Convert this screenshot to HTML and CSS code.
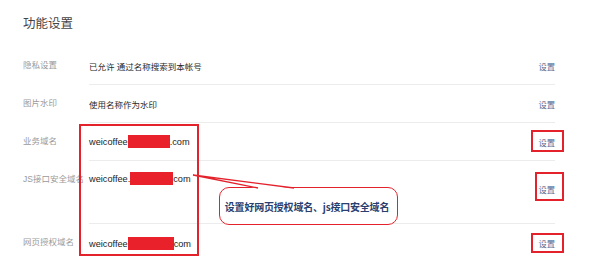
FILE: index.html
```html
<!DOCTYPE html>
<html lang="zh">
<head>
<meta charset="utf-8">
<link rel="stylesheet" href="styles.css">
</head>
<body>
<div class="page">
  <h2 class="title">功能设置</h2>
  <div class="list">
    <div class="row">
      <div class="label">隐私设置</div>
      <div class="body"><span class="value">已允许 通过名称搜索到本帐号</span><a class="act">设置</a></div>
    </div>
    <div class="row">
      <div class="label">图片水印</div>
      <div class="body"><span class="value">使用名称作为水印</span><a class="act">设置</a></div>
    </div>
    <div class="row">
      <div class="label">业务域名</div>
      <div class="body"><span class="value dom">weicoffee<span class="redact"></span>.com</span><a class="act">设置</a></div>
    </div>
    <div class="row tall">
      <div class="label">JS接口安全域名</div>
      <div class="body"><span class="value dom">weicoffee.<span class="redact r2"></span>com</span><a class="act">设置</a></div>
    </div>
    <div class="row last">
      <div class="label">网页授权域名</div>
      <div class="body"><span class="value dom">weicoffee<span class="redact r3"></span>com</span><a class="act">设置</a></div>
    </div>
  </div>

  <div class="mark m-box"></div>
  <div class="mark m1"></div>
  <div class="mark m2"></div>
  <div class="mark m3"></div>

  <div class="callout">设置好网页授权域名、js接口安全域名</div>
  <svg class="pointer" width="120" height="20" viewBox="190 172 120 20">
    <polygon points="193,175 294,188.5 258,188.5" fill="#fff"/>
    <polyline points="258,188 193,175 294,188" fill="none" stroke="#e3222c" stroke-width="1.3"/>
  </svg>
</div>
</body>
</html>
```
FILE: styles.css
```css
html, body {
  margin: 0;
  padding: 0;
  background: #fff;
}
.page {
  position: relative;
  width: 601px;
  height: 263px;
  overflow: hidden;
  font-family: "Liberation Sans", "Noto Sans CJK SC", sans-serif;
}
.title {
  margin: 0;
  padding: 15px 0 0 23px;
  height: 32px;
  line-height: 18px;
  font-size: 12.5px;
  font-weight: normal;
  color: #454545;
}
.list {
  margin-left: 23px;
  width: 532px;
}
.row {
  display: flex;
  height: 38px;
}
.label {
  width: 66px;
  flex: none;
  line-height: 37px;
  font-size: 8.5px;
  color: #9a9a9a;
  white-space: nowrap;
}
.body {
  flex: 1;
  display: flex;
  align-items: center;
  justify-content: space-between;
  border-bottom: 1px solid #ececec;
  box-sizing: border-box;
  height: 38px;
}
.value {
  font-size: 8.5px;
  color: #2a2a2a;
}
.dom {
  font-size: 9.2px;
  color: #222;
}
.act {
  font-size: 8.3px;
  color: #5a6a92;
}
.redact {
  display: inline-block;
  width: 42px;
  height: 13px;
  background: #e8212b;
  vertical-align: -3px;
}
.r2 {
  width: 43px;
}
.r3 {
  width: 46px;
}
.row.tall {
  height: 63px;
}
.tall .label {
  line-height: 37px;
}
.tall .body {
  height: 63px;
  align-items: flex-start;
}
.tall .value {
  line-height: 37px;
}
.tall .act {
  align-self: center;
  margin-bottom: 6px;
}
.row.last .body {
  border-bottom: none;
}
.mark {
  position: absolute;
  border: 2px solid #e3222c;
  box-sizing: border-box;
}
.m-box {
  left: 79px;
  top: 124px;
  width: 120px;
  height: 132px;
}
.m1 {
  left: 531px;
  top: 130px;
  width: 33px;
  height: 22px;
}
.m2 {
  left: 535px;
  top: 172px;
  width: 29px;
  height: 29px;
}
.m3 {
  left: 531px;
  top: 233px;
  width: 33px;
  height: 20px;
}
.callout {
  position: absolute;
  left: 219px;
  top: 187px;
  width: 179px;
  height: 38px;
  box-sizing: border-box;
  border: 1.5px solid #e3222c;
  border-radius: 10px;
  background: #fff;
  display: flex;
  align-items: center;
  justify-content: center;
  padding-right: 3px;
  font-family: "Noto Sans CJK SC", "Liberation Sans", sans-serif;
  font-size: 10px;
  font-weight: bold;
  color: #283f70;
  white-space: nowrap;
  letter-spacing: -0.2px;
}
.pointer {
  position: absolute;
  left: 190px;
  top: 172px;
}
```
